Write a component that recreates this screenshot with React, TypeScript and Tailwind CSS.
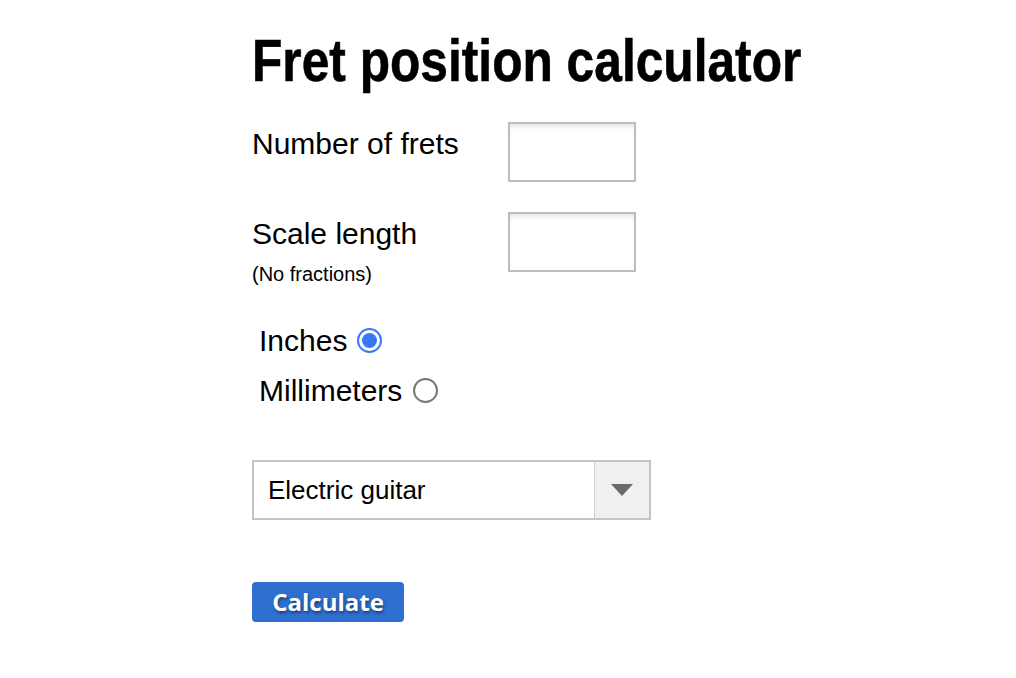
import React, { useState } from 'react';

const sans = { fontFamily: '"Liberation Sans", Arial, sans-serif' };

const TextBox: React.FC = () => (
  <input
    type="text"
    className="h-[60px] w-[128px] border-2 border-[#bdbdbd] bg-white shadow-[inset_0_4px_5px_-2px_rgba(0,0,0,0.12)] outline-none"
  />
);

const Radio: React.FC<{ checked: boolean; onClick: () => void }> = ({ checked, onClick }) => (
  <button
    type="button"
    onClick={onClick}
    className={
      checked
        ? 'flex h-[25px] w-[25px] items-center justify-center rounded-full border-[2.5px] border-[#3478f6] bg-white'
        : 'flex h-[25px] w-[25px] items-center justify-center rounded-full border-2 border-[#767676] bg-white'
    }
  >
    {checked && <span className="h-[15px] w-[15px] rounded-full bg-[#3478f6]" />}
  </button>
);

export default function App() {
  const [unit, setUnit] = useState<'in' | 'mm'>('in');

  return (
    <div className="min-h-[678px] bg-white text-black" style={sans}>
      <div className="ml-[252px] pt-[28px]">
        <h1 className="text-[60px] leading-[66px] font-bold">
          <span className="inline-block origin-left scale-x-[0.828] whitespace-nowrap [-webkit-text-stroke:0.6px_black]">
            Fret position calculator
          </span>
        </h1>

        <div className="mt-[28px] flex">
          <div className="w-[256px] pt-[4px] text-[30px] leading-[35px]">Number of frets</div>
          <TextBox />
        </div>

        <div className="mt-[30px] flex">
          <div className="w-[256px] pt-[4px]">
            <div className="text-[30px] leading-[35px]">Scale length</div>
            <div className="mt-[12px] text-[20px] leading-[22px]">(No fractions)</div>
          </div>
          <TextBox />
        </div>

        <div className="mt-[38px] ml-[7px] flex flex-col gap-[15px] text-[30px] leading-[35px]">
          <label className="flex items-center gap-[10px]">
            <span>Inches</span>
            <Radio checked={unit === 'in'} onClick={() => setUnit('in')} />
          </label>
          <label className="flex items-center gap-[11px]">
            <span>Millimeters</span>
            <Radio checked={unit === 'mm'} onClick={() => setUnit('mm')} />
          </label>
        </div>

        <div className="mt-[52px] flex h-[60px] w-[399px] border-2 border-[#c4c4c4] bg-white">
          <div className="flex flex-1 items-center pl-[14px] text-[26px]">Electric guitar</div>
          <div className="flex w-[55px] items-center justify-center border-l border-[#d0d0d0] bg-[#f0f0f0]">
            <svg width="22" height="12" viewBox="0 0 22 12">
              <path d="M0 0 H22 L11 12 Z" fill="#6b6b6b" />
            </svg>
          </div>
        </div>

        <button
          type="button"
          className="mt-[62px] flex h-[40px] w-[152px] items-center justify-center rounded-[4px] bg-[#2f6fcf] text-[24px] font-bold text-white [text-shadow:1px_2px_3px_rgba(0,0,0,0.45)]"
          style={{ fontFamily: '"Open Sans", sans-serif' }}
        >
          Calculate
        </button>
      </div>
    </div>
  );
}
